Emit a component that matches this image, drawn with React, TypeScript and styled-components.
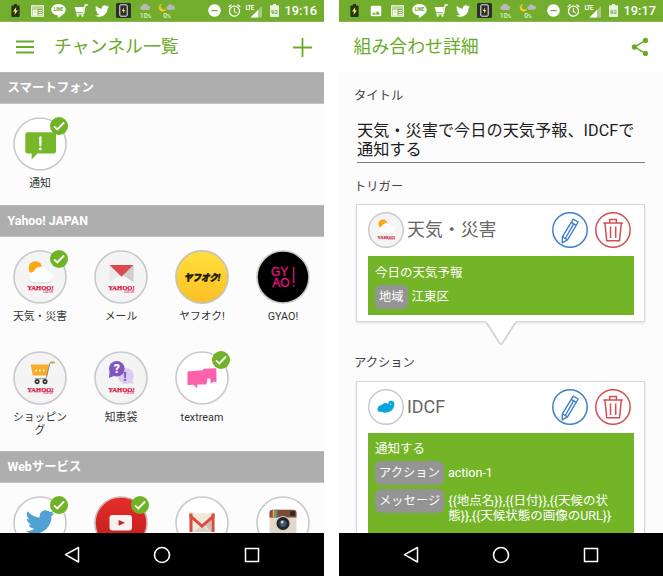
import React from "react";
import styled, { createGlobalStyle } from "styled-components";
import { FaTwitter } from "react-icons/fa";
import { MdAlarm, MdDoNotDisturbOn, MdImage, MdShare } from "react-icons/md";

const GREEN = "#74b527";

const GlobalStyle = createGlobalStyle`
  * { box-sizing: border-box; }
  body {
    margin: 0;
    background: #fff;
    font-family: Roboto, "Noto Sans CJK JP", sans-serif;
    overflow: hidden;
  }
  svg { display: block; flex: none; overflow: visible; }
`;

const Stage = styled.div`
  display: flex;
  justify-content: space-between;
  width: 663px;
  height: 576px;
`;

const Phone = styled.div`
  display: flex;
  flex-direction: column;
  width: 324px;
  height: 576px;
  overflow: hidden;
  background: #fcfcfc;
`;

const StatusBar = styled.div`
  display: flex;
  flex: none;
  align-items: center;
  height: 22px;
  padding: 0 7px 0 5px;
  background: #72ad2e;
  border-bottom: 1px solid #86b94b;
  color: #fff;
`;

const Slot = styled.div<{ $w?: number }>`
  display: flex;
  flex: none;
  justify-content: center;
  width: ${(p) => p.$w ?? 21.6}px;
`;

const Spacer = styled.div`
  flex: 1;
`;

const Clock = styled.span`
  width: 33px;
  font-size: 12.8px;
  font-weight: 500;
  line-height: 20px;
  text-align: right;
  white-space: nowrap;
`;

const AppBar = styled.header<{ $inset: number }>`
  display: flex;
  flex: none;
  align-items: center;
  height: 50px;
  padding: 0 12px 0 ${(p) => p.$inset}px;
  background: #fff;
  color: #6aab28;
`;

const AppTitle = styled.h1`
  flex: 1;
  margin: 0;
  font-size: 17.9px;
  font-weight: 400;
  line-height: 24px;
`;

const MenuSlot = styled.div`
  width: 38px;
`;

const Content = styled.main`
  flex: 1;
  min-height: 0;
  overflow: hidden;
`;

const NavBar = styled.nav`
  display: flex;
  flex: none;
  align-items: center;
  justify-content: space-between;
  height: 43px;
  padding: 0 64px;
  background: #000;
`;

const SectionHeader = styled.h2`
  height: 32px;
  margin: 0;
  padding: 0 7.500px;
  background: #aeaeae;
  border-top: 1px solid #b8b8b8;
  border-bottom: 1px solid #c4c4c4;
  color: #fff;
  font-size: 12.4px;
  font-weight: 700;
  line-height: 30px;
`;

const ChannelGrid = styled.div`
  display: grid;
  grid-template-columns: repeat(4, 81px);
  margin-left: -0.5px;
`;

const Channel = styled.div`
  display: flex;
  flex-direction: column;
  align-items: center;
  padding: 13px 0 14px;
`;

const Avatar = styled.div`
  position: relative;
  width: 54px;
  height: 54px;
`;

const Badge = styled.div`
  position: absolute;
  top: 0;
  right: -1px;
`;

const ChannelName = styled.div`
  width: 56px;
  margin-top: 4px;
  color: #333;
  font-size: 10.8px;
  line-height: 13px;
  min-height: 16px;
  padding-top: 2px;
  text-align: center;
  word-break: break-all;
`;

const Detail = styled.div`
  padding: 15px 18px 0 17px;
`;

const FieldLabel = styled.div<{ $top?: number; $bottom?: number }>`
  height: 18px;
  margin: ${(p) => p.$top ?? 0}px 0 ${(p) => p.$bottom ?? 0}px -2px;
  color: #444;
  font-size: 12.3px;
  line-height: 18px;
`;

const TitleField = styled.div`
  height: 42px;
  margin: 16px 0 0 1px;
  border-bottom: 1px solid #7c7c7c;
  color: #1c1c1c;
  font-size: 16.2px;
  line-height: 19.2px;
`;

const Card = styled.section<{ $height: number }>`
  height: ${(p) => p.$height}px;
  padding: 7px 10px 0 10.500px;
  background: #fff;
  border: 1.5px solid #d9d9d9;
  box-shadow: 0 1px 2px rgba(0, 0, 0, 0.12);
`;

const CardHead = styled.div`
  display: flex;
  align-items: center;
  height: 36px;
`;

const CardTitle = styled.h3`
  flex: 1;
  margin: 0;
  padding-left: 3.5px;
  color: #666;
  font-size: 17.9px;
  font-weight: 400;
  line-height: 26px;
`;

const Actions = styled.div`
  display: flex;
  gap: 7px;
  margin-right: 3.5px;
`;

const GreenPanel = styled.div<{ $height: number }>`
  display: flex;
  flex-direction: column;
  height: ${(p) => p.$height}px;
  margin-top: 8px;
  padding: 6.5px 7px 0 7.5px;
  background: ${GREEN};
  color: #fff;
`;

const PanelTitle = styled.div`
  font-size: 12.5px;
  line-height: 20px;
  height: 20px;
  margin-bottom: 2px;
`;

const Param = styled.div`
  display: flex;
  align-items: flex-start;
  margin-bottom: 4px;
`;

const Chip = styled.span`
  flex: none;
  height: 24px;
  padding: 0 4px;
  border-radius: 6px;
  background: #949494;
  font-size: 12.3px;
  line-height: 24px;
`;

const ParamValue = styled.span`
  padding-left: 4px;
  font-size: 12.5px;
  line-height: 14.6px;
  padding-top: 5px;
  white-space: pre;
`;

const PointerRow = styled.div`
  display: flex;
  justify-content: center;
  height: 24px;
  margin-top: -1.5px;
`;

/* ---------- status bar icons ---------- */

const ChargeIcon = () => (
  <svg width="9" height="13" viewBox="0 0 9 13">
    <path d="M3 0h3v1.4h1.6q1 0 1 1V12q0 1-1 1H1.4q-1 0-1-1V2.400q0-1 1-1H3z" fill="#26331b" />
    <path d="M5.200 3L2 7.400h2L3.500 11 7 6.200H5z" fill="#f4e94c" />
  </svg>
);

const NewsIcon = () => (
  <svg width="13" height="12" viewBox="0 0 13 12">
    <path d="M.8 .8h11.400v10.400H.8z" fill="none" stroke="#fff" strokeWidth="1.300" />
    <path d="M2 3h9M2.500 5h3.500v5H2.500zM7.500 5.500h3.500M7.500 7.500h3.500M7.500 9.500h3.500" stroke="#fff" strokeWidth="1.100" fill="#dcebc8" />
  </svg>
);

const LineIcon = () => (
  <svg width="15" height="14" viewBox="0 0 15 14">
    <path d="M7.500 0C3.400 0 .3 2.500.3 5.700c0 2.900 2.700 5.100 6 5.600.9.100.6.700.5 2.700 2.700-1.400 7.900-4.600 7.900-8.300C14.700 2.500 11.600 0 7.500 0z" fill="#fff" />
    <text x="7.500" y="7.400" fontSize="4.500" fontWeight="900" textAnchor="middle" fill="#72ad2e">LINE</text>
  </svg>
);

const StatusCart = () => (
  <svg width="14" height="13" viewBox="0 0 14 13" fill="none" stroke="#fff">
    <path d="M.5 3h9.500L9 8.200H2.200z" fill="#fff" stroke="none" />
    <path d="M13.800 1h-2.600L9.400 9.800H2.200" strokeWidth="1.300" />
    <circle cx="3.800" cy="11.700" r="1.100" fill="#fff" stroke="none" />
    <circle cx="8.500" cy="11.700" r="1.100" fill="#fff" stroke="none" />
  </svg>
);

const DeviceIcon = () => (
  <svg width="15" height="15" viewBox="0 0 15 15">
    <rect width="15" height="15" rx="1.500" fill="#2b2f2b" />
    <rect x="3.800" y="1.800" width="7.400" height="11.400" rx="1" fill="none" stroke="#eee" />
    <path d="M8.200 4.200L5.800 7.900h1.500l-.5 2.900 2.500-3.700H7.700z" fill="#f4e94c" />
  </svg>
);

const RainIcon = () => (
  <svg width="13" height="14" viewBox="0 0 13 14">
    <path d="M3 6a2.200 2.200 0 0 1 .2-4.300A3 3 0 0 1 8.800 1.500 2.300 2.300 0 0 1 9.600 6z" fill="#b5b9b8" />
    <text x="6.500" y="13.600" fontSize="6.800" textAnchor="middle" fill="#fff">10<tspan fontSize="5">%</tspan></text>
  </svg>
);

const MoonIcon = () => (
  <svg width="16" height="14" viewBox="0 0 16 14">
    <path d="M2.500.3A3.600 3.600 0 1 0 7 4.900 3.200 3.200 0 0 1 2.500.3z" fill="#f5cf26" stroke="#f5cf26" strokeWidth=".6" />
    <path d="M8.700 5.800a2 2 0 0 1 .2-3.900 2.700 2.700 0 0 1 5-.1 2 2 0 0 1 .3 4z" fill="#b5b9b8" />
    <text x="8" y="13.600" fontSize="6.800" textAnchor="middle" fill="#fff">0<tspan fontSize="5">%</tspan></text>
  </svg>
);

const SignalIcon = () => (
  <svg width="17" height="14" viewBox="0 0 17 14">
    <path d="M16 2v11.500H4.500z" fill="#a8cd80" />
    <path d="M12 6v7.500H4.500z" fill="#fff" />
    <text x="-.5" y="5.600" fontSize="6.500" fontWeight="500" fill="#fff" textLength="9">LTE</text>
  </svg>
);

const BatteryIcon = () => (
  <svg width="9" height="13" viewBox="0 0 9 13">
    <path d="M3 0h3v1.300h2.300q.7 0 .7.700v10.300q0 .7-.7.700H.7q-.7 0-.7-.7V2q0-.7.700-.7H3z" fill="#e9f2de" />
    <text x="4.500" y="9.500" fontSize="6" fontWeight="500" textAnchor="middle" fill="#5f9a20">92</text>
  </svg>
);

/* ---------- app icons ---------- */

const MenuIcon = () => (
  <svg width="18" height="14" viewBox="0 0 18 14" stroke="#6aab28" strokeWidth="1.800">
    <path d="M0 1.500h18M0 7h18M0 12.500h18" />
  </svg>
);

const PlusIcon = () => (
  <svg width="19" height="19" viewBox="0 0 19 19" stroke="#6aab28" strokeWidth="1.800">
    <path d="M9.500 0v19M0 9.500h19" />
  </svg>
);

const CheckIcon = () => (
  <svg width="18" height="18" viewBox="0 0 18 18">
    <circle cx="9" cy="9" r="9" fill="#6fb326" />
    <path d="M4 9.300l3.300 3.200 6.800-7" fill="none" stroke="#fff" strokeWidth="1.800" />
  </svg>
);

const Disc = ({ fill = "#fff", size = 54, children }: { fill?: string; size?: number; children?: React.ReactNode }) => (
  <svg width={size} height={size} viewBox="-27 -27 54 54">
    <circle r="26" fill={fill} stroke="#c9c9cb" strokeWidth={size < 54 ? 2.2 : 1.6} />
    {children}
  </svg>
);

const YahooMark = () => (
  <g fill="#d5123f" fontFamily="'Liberation Serif', serif" fontWeight="700">
    <text x="-12.800" y="13" fontSize="7" stroke="#d5123f" strokeWidth=".25" textLength="26.500" lengthAdjust="spacingAndGlyphs">YAHOO!</text>
    <text x="3" y="15.600" fontSize="3" textLength="10" lengthAdjust="spacingAndGlyphs">JAPAN</text>
  </g>
);

const WeatherArt = () => (
  <g>
    <circle cx="-4.600" cy="-9" r="6.800" fill="#fba70d" />
    <path d="M-5.500 6.500a5.800 5.800 0 0 1-1-11.300 8 8 0 0 1 14.700-1A6.400 6.400 0 0 1 7.200 6.500z" fill="#d2d2d2" />
    <path d="M-5.500 5.500a5.500 5.500 0 0 1-.7-10.900 7.900 7.900 0 0 1 14.200-.8A5.900 5.900 0 0 1 7.200 5.500z" fill="#fff" />
    <YahooMark />
  </g>
);

const MailArt = () => (
  <g>
    <path d="M-11.500-12H12.500V5.500H-11.500z" fill="#e9e9e9" />
    <path d="M12.500-12V5.500L1-1z" fill="#cfcfcf" />
    <path d="M-11.500 5.500L.5-3 12.500 5.500z" fill="#f7f7f7" />
    <path d="M-11.500-12H12.500L.5-.3z" fill="#dc4a4e" />
    <YahooMark />
  </g>
);

const ShoppingArt = () => (
  <g>
    <path d="M-9.300-13.500H9L7.500-2.500H-7.300z" fill="#f9ab2c" />
    <path d="M14-15.300H10L6 .7H-5" fill="none" stroke="#8c8c8c" strokeWidth="1" />
    <path d="M14.800-15.600h-4" stroke="#e5a243" strokeWidth="2" />
    <path d="M-4.500-7.500h1.500M-1-7.500H.7M3-7.500h1.500" stroke="#fff0c8" strokeWidth="1.800" />
    <circle cx="-2.900" cy="3.600" r="1.700" fill="#fff" stroke="#333" strokeWidth="1.700" />
    <circle cx="5" cy="3.600" r="1.700" fill="#fff" stroke="#333" strokeWidth="1.700" />
    <g transform="translate(0 .8)"><YahooMark /></g>
  </g>
);

const AnswersArt = () => (
  <g fontWeight="900" textAnchor="middle">
    <circle cx="4.800" cy="-2" r="8" fill="#d9cdf0" />
    <path d="M7 5l6 .8-2-4z" fill="#d9cdf0" />
    <circle cx="-4.200" cy="-9.200" r="7.800" fill="#8057bd" />
    <path d="M-11.500-6l-.5 6 5-2z" fill="#8057bd" />
    <text x="-4.200" y="-5" fontSize="12" fill="#fff">?</text>
    <text x="4" y="2.500" fontSize="12" fill="#8057bd">!</text>
    <g textAnchor="start" transform="translate(0 .8)"><YahooMark /></g>
  </g>
);

const AuctionDisc = () => (
  <svg width="54" height="54" viewBox="-27 -27 54 54">
    <defs>
      <linearGradient id="auction" x1="0" y1="0" x2="0" y2="1">
        <stop offset="0" stopColor="#ffe03c" />
        <stop offset="1" stopColor="#fbbf25" />
      </linearGradient>
    </defs>
    <circle r="26" fill="url(#auction)" stroke="#c9c5b0" strokeWidth="1.800" />
    <text x="-18" y="4" fontSize="9.500" fontWeight="900" fontStyle="italic" fill="#1c1600" stroke="#1c1600" strokeWidth=".5" textLength="36" lengthAdjust="spacingAndGlyphs">ヤフオク!</text>
  </svg>
);

const GyaoDisc = () => (
  <Disc fill="#000">
    <g fill="#e0147f" stroke="#e0147f" strokeWidth=".35" fontFamily="'Liberation Sans', sans-serif" fontSize="12">
      <text x="-12" y="-1.300">GY</text>
      <text x="-10.800" y="9.500">AO</text>
      <path d="M10.200-10h1V6h-1zM10.200 8h1v1.500h-1z" />
    </g>
  </Disc>
);

const NoticeArt = () => (
  <g>
    <path d="M-12.500-11.800H13.800q2.200 0 2.200 2.200V7.300q0 2.200-2.200 2.200H-2.500l-5.800 6V9.500h-4.200q-2.200 0-2.200-2.200V-9.600q0-2.200 2.200-2.200z" fill="#76b82a" />
    <path d="M.4-6.600V1.300" stroke="#fff" strokeWidth="2.300" strokeLinecap="round" />
    <circle cx=".4" cy="5" r="1.400" fill="#fff" />
  </g>
);

const TextreamArt = () => (
  <path d="M-14.500-6.500L.8-7.800 1.500-9.200 14.300-9.700 14.500 3.900 11.200 3.700 8.800 5.800 8.300 .5 5.300.6 5 3.400 4.400 6.500-4.500 6.500-5.200 10.300-8.500 6.800-14.500 7z" fill="#fb62aa" />
);

const TubeDisc = () => (
  <svg width="54" height="54" viewBox="-27 -27 54 54">
    <defs>
      <linearGradient id="tube" x1="0" y1="0" x2="0" y2="1">
        <stop offset="0" stopColor="#e52f29" />
        <stop offset="1" stopColor="#bd1a1c" />
      </linearGradient>
    </defs>
    <circle r="26" fill="url(#tube)" stroke="#cdb5b5" strokeWidth="1.600" />
    <rect x="-11.500" y="-8" width="22.500" height="15.500" rx="3" fill="#f8f3f1" />
    <path d="M-2.400-3L4-.2-2.400 2.800z" fill="#c9211f" />
  </svg>
);

const GmailArt = () => (
  <g>
    <path d="M-12.500-9.700h25V9h-25z" fill="#efe9dc" />
    <path d="M-9 9L0 2l9 7z" fill="#dcd5c6" />
    <path d="M2 1L9-5V9z" fill="#c9c2b4" />
    <path d="M-11-9.500V9M11-9.500V9" stroke="#dc4b40" strokeWidth="3" />
    <path d="M-12.500-9.700L0 1.200l12.500-10.900v4L0 5-12.500-5.700z" fill="#dd4b3e" />
  </g>
);

const CameraArt = () => (
  <g>
    <rect x="-13.500" y="-13.300" width="27" height="27" rx="3.500" fill="#e3d9cb" />
    <path d="M-13.500-5.500V-10q0-3.300 3.300-3.300H10q3.500 0 3.500 3.300v4.500z" fill="#7c4a35" />
    <path d="M-10.700-13v7.500" stroke="#dd4b43" strokeWidth="1.500" />
    <path d="M-9.200-13.200v7.700" stroke="#e9ba3c" strokeWidth="1.500" />
    <path d="M-7.700-13.200v7.700" stroke="#61ac52" strokeWidth="1.500" />
    <path d="M-6.200-13.200v7.700" stroke="#4688c7" strokeWidth="1.500" />
    <rect x="7" y="-11.800" width="5" height="4.600" rx="1" fill="#302723" />
    <circle cy=".5" r="7.500" fill="#d4cabb" />
    <circle cy=".5" r="6.500" fill="#25262a" />
    <circle cy=".5" r="3.600" fill="#3c566e" />
    <circle cx="-.8" cy="-1" r="1.500" fill="#b7d6e5" />
  </g>
);

const CloudArt = () => (
  <g fill="#08a5db">
    <path d="M-12.600 2.500c.6-4.500 4.500-5 7-6.400 2.800-2.600 7-2.900 9.300-.7l8.600-.4c.2 4.600-1.400 9.600-7.200 12-4.500 2-9.300 1.800-12.500.2-3.500.2-6-.9-5.200-4.700z" />
    <path d="M4-4c-1.500-3.500 1.500-5.600 4.500-5.200 3.200.3 4.500 2.900 3.800 6z" />
    <path d="M5.500-5.500c1.500 0 2 1.200 1.700 2.700" fill="none" stroke="#d5f1fb" strokeWidth="1" />
  </g>
);

const PencilIcon = () => (
  <svg width="36" height="36" viewBox="-18 -18 36 36" fill="none" stroke="#3d80ca">
    <circle r="17.200" strokeWidth="1.500" />
    <path d="M3.200-10.800l5 2.800L-2.500 9.800l-5.300 3 .2-6zM1.200-7.600l5 2.900M-7.300 7l4.800 2.800M3.500-5.800L-4.500 8" strokeWidth="1.400" strokeLinejoin="round" />
  </svg>
);

const TrashIcon = () => (
  <svg width="36" height="36" viewBox="-18 -18 36 36" fill="none" stroke="#d64d50">
    <circle r="17.200" strokeWidth="1.500" />
    <path d="M-9.700-7H9.900M-3.300-7.300v-3.200h6.700v3.200M-8-6.500L-6.300 10.800H6.500L8.300-6.500M-2.500-3.500V8M2.700-3.500V8" strokeWidth="1.500" strokeLinejoin="round" />
  </svg>
);

const PointerShape = () => (
  <svg width="32" height="24" viewBox="0 0 32 24">
    <path d="M1 .8L14.500 22q1.500 2 3 0L31 .8" fill="#fff" stroke="#d3d3d3" strokeWidth="1.800" />
    <path d="M1.500 -.5h29v2h-29z" fill="#fff" />
  </svg>
);

const SystemNav = () => (
  <NavBar>
    <svg width="16" height="18" viewBox="0 0 16 18"><path d="M14.500 1.500v14.500L1.500 8.700z" fill="none" stroke="#fff" strokeWidth="1.500" strokeLinejoin="round" /></svg>
    <svg width="18" height="18" viewBox="0 0 18 18"><circle cx="9" cy="9" r="7.500" fill="none" stroke="#fff" strokeWidth="1.600" /></svg>
    <svg width="16" height="16" viewBox="0 0 16 16"><rect x="1.500" y="1.500" width="13" height="13" fill="none" stroke="#fff" strokeWidth="1.500" /></svg>
  </NavBar>
);

const Status = ({ time, withPicture }: { time: string; withPicture?: boolean }) => (
  <StatusBar>
    <Slot><ChargeIcon /></Slot>
    {withPicture && <Slot><MdImage size={14} /></Slot>}
    <Slot><NewsIcon /></Slot>
    <Slot><LineIcon /></Slot>
    <Slot><StatusCart /></Slot>
    <Slot><FaTwitter size={14} /></Slot>
    <Slot><DeviceIcon /></Slot>
    <Slot><RainIcon /></Slot>
    <Slot><MoonIcon /></Slot>
    <Spacer />
    <Slot $w={19.5}><MdDoNotDisturbOn size={15} /></Slot>
    <Slot $w={19.5}><MdAlarm size={15} /></Slot>
    <Slot $w={21}><SignalIcon /></Slot>
    <Slot $w={19}><BatteryIcon /></Slot>
    <Clock>{time}</Clock>
  </StatusBar>
);

type ChannelItem = { id: string; name?: string; icon: React.ReactNode; on?: boolean };

const YAHOO_BG = "#f4f4f5";

const sections: { title: string; items: ChannelItem[] }[] = [
  { title: "スマートフォン", items: [{ id: "notice", name: "通知", icon: <Disc><NoticeArt /></Disc>, on: true }] },
  {
    title: "Yahoo! JAPAN",
    items: [
      { id: "weather", name: "天気・災害", icon: <Disc fill={YAHOO_BG}><WeatherArt /></Disc>, on: true },
      { id: "mail", name: "メール", icon: <Disc fill={YAHOO_BG}><MailArt /></Disc> },
      { id: "auction", name: "ヤフオク!", icon: <AuctionDisc /> },
      { id: "gyao", name: "GYAO!", icon: <GyaoDisc /> },
      { id: "shopping", name: "ショッピング", icon: <Disc fill={YAHOO_BG}><ShoppingArt /></Disc> },
      { id: "answers", name: "知恵袋", icon: <Disc fill={YAHOO_BG}><AnswersArt /></Disc> },
      { id: "textream", name: "textream", icon: <Disc><TextreamArt /></Disc>, on: true },
    ],
  },
  {
    title: "Webサービス",
    items: [
      { id: "twitter", icon: <Disc><FaTwitter x={-14.5} y={-15.5} size={29} color="#52a1d3" /></Disc>, on: true },
      { id: "youtube", icon: <TubeDisc />, on: true },
      { id: "gmail", icon: <Disc><GmailArt /></Disc> },
      { id: "instagram", icon: <Disc><CameraArt /></Disc> },
    ],
  },
];

const ChannelList = () => (
  <Phone>
    <Status time="19:16" />
    <AppBar $inset={16}>
      <MenuSlot><MenuIcon /></MenuSlot>
      <AppTitle>チャンネル一覧</AppTitle>
      <PlusIcon />
    </AppBar>
    <Content>
      {sections.map((s) => (
        <section key={s.title}>
          <SectionHeader>{s.title}</SectionHeader>
          <ChannelGrid>
            {s.items.map((c) => (
              <Channel key={c.id}>
                <Avatar>
                  {c.icon}
                  {c.on && <Badge><CheckIcon /></Badge>}
                </Avatar>
                {c.name && <ChannelName>{c.name}</ChannelName>}
              </Channel>
            ))}
          </ChannelGrid>
        </section>
      ))}
    </Content>
    <SystemNav />
  </Phone>
);

const CardHeader = ({ title, icon }: { title: string; icon: React.ReactNode }) => (
  <CardHead>
    {icon}
    <CardTitle>{title}</CardTitle>
    <Actions>
      <PencilIcon />
      <TrashIcon />
    </Actions>
  </CardHead>
);

const RecipeDetail = () => (
  <Phone>
    <Status time="19:17" withPicture />
    <AppBar $inset={14.5}>
      <AppTitle>組み合わせ詳細</AppTitle>
      <MdShare size={22} />
    </AppBar>
    <Content>
      <Detail>
        <FieldLabel>タイトル</FieldLabel>
        <TitleField>天気・災害で今日の天気予報、IDCFで通知する</TitleField>
        <FieldLabel $top={14.5} $bottom={8.5}>トリガー</FieldLabel>
        <div>
          <Card $height={118}>
            <CardHeader title="天気・災害" icon={<Disc size={36} fill={YAHOO_BG}><WeatherArt /></Disc>} />
            <GreenPanel $height={59}>
              <PanelTitle>今日の天気予報</PanelTitle>
              <Param><Chip>地域</Chip><ParamValue>江東区</ParamValue></Param>
            </GreenPanel>
          </Card>
          <PointerRow><PointerShape /></PointerRow>
        </div>
        <FieldLabel $top={9.5} $bottom={8.5}>アクション</FieldLabel>
        <Card $height={190}>
          <CardHeader title="IDCF" icon={<Disc size={36}><CloudArt /></Disc>} />
          <GreenPanel $height={130}>
            <PanelTitle>通知する</PanelTitle>
            <Param><Chip>アクション</Chip><ParamValue>action-1</ParamValue></Param>
            <Param>
              <Chip>メッセージ</Chip>
              <ParamValue>{"{{地点名}},{{日付}},{{天候の状\n態}},{{天候状態の画像のURL}}"}</ParamValue>
            </Param>
          </GreenPanel>
        </Card>
      </Detail>
    </Content>
    <SystemNav />
  </Phone>
);

export default function App() {
  return (
    <>
      <GlobalStyle />
      <Stage>
        <ChannelList />
        <RecipeDetail />
      </Stage>
    </>
  );
}
